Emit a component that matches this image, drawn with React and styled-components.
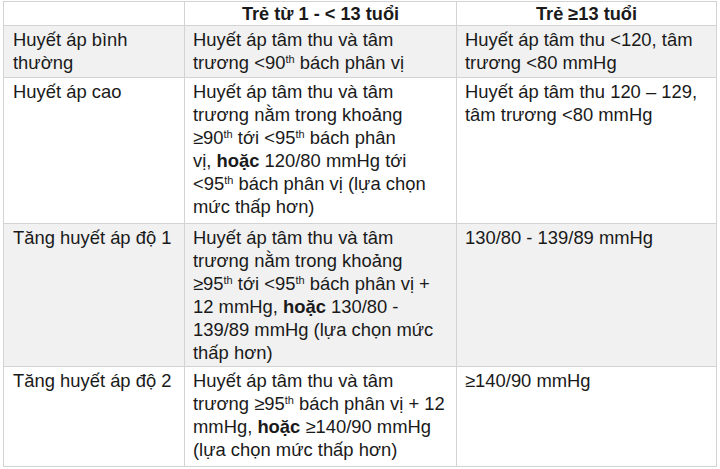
import React from "react";
import styled, { createGlobalStyle } from "styled-components";

const Global = createGlobalStyle`
  html, body { margin: 0; padding: 0; background: #ffffff; }
  body { font-family: "Liberation Sans", Arial, sans-serif; color: #1a1a1a; }
`;

const Page = styled.div`
  padding: 1px 0 0 3px;
`;

const Table = styled.div`
  width: 714px;
  display: flex;
  flex-direction: column;
  border-top: 1px solid #d3d3d3;
  border-left: 1px solid #d3d3d3;
  box-sizing: border-box;
`;

const Row = styled.div`
  display: grid;
  grid-template-columns: 181px 272px 260px;
  height: ${(p) => p.$h}px;
  box-sizing: border-box;
  border-bottom: 1px solid #d3d3d3;
  background: ${(p) => (p.$shade ? "#f1f1f1" : "#ffffff")};
`;

const Cell = styled.div`
  box-sizing: border-box;
  border-right: 1px solid #d3d3d3;
  padding: 2px 6px 0 ${(p) => (p.$first ? 9 : 8)}px;
  font-size: 18.4px;
  line-height: 23px;
  white-space: nowrap;
  overflow: hidden;
`;

const HeadCell = styled.div`
  box-sizing: border-box;
  border-right: 1px solid #d3d3d3;
  font-size: 18.2px;
  font-weight: 700;
  line-height: 22px;
  padding-top: 1px;
  text-align: center;
  white-space: nowrap;
`;

const Line = styled.div``;

const Sup = styled.sup`
  font-size: 11px;
  line-height: 0;
  vertical-align: 6px;
`;

const B = styled.b`
  font-weight: 700;
`;

const th = <Sup>th</Sup>;

const rows = [
  {
    h: 52,
    shade: true,
    c1: ["Huyết áp bình", "thường"],
    c2: [
      "Huyết áp tâm thu và tâm",
      <>trương &lt;90{th} bách phân vị</>,
    ],
    c3: ["Huyết áp tâm thu <120, tâm", "trương <80 mmHg"],
  },
  {
    h: 146,
    shade: false,
    c1: ["Huyết áp cao"],
    c2: [
      "Huyết áp tâm thu và tâm",
      "trương nằm trong khoảng",
      <>≥90{th} tới &lt;95{th} bách phân</>,
      <>vị, <B>hoặc</B> 120/80 mmHg tới</>,
      <>&lt;95{th} bách phân vị (lựa chọn</>,
      "mức thấp hơn)",
    ],
    c3: ["Huyết áp tâm thu 120 – 129,", "tâm trương <80 mmHg"],
  },
  {
    h: 143,
    shade: true,
    c1: ["Tăng huyết áp độ 1"],
    c2: [
      "Huyết áp tâm thu và tâm",
      "trương nằm trong khoảng",
      <>≥95{th} tới &lt;95{th} bách phân vị +</>,
      <>12 mmHg, <B>hoặc</B> 130/80 -</>,
      "139/89 mmHg (lựa chọn mức",
      "thấp hơn)",
    ],
    c3: ["130/80 - 139/89 mmHg"],
  },
  {
    h: 100,
    shade: false,
    c1: ["Tăng huyết áp độ 2"],
    c2: [
      "Huyết áp tâm thu và tâm",
      <>trương ≥95{th} bách phân vị + 12</>,
      <>mmHg, <B>hoặc</B> ≥140/90 mmHg</>,
      "(lựa chọn mức thấp hơn)",
    ],
    c3: ["≥140/90 mmHg"],
  },
];

const Lines = ({ items }) =>
  items.map((t, i) => <Line key={i}>{t}</Line>);

export default function App() {
  return (
    <>
      <Global />
      <Page>
        <Table>
          <Row $h={24}>
            <HeadCell />
            <HeadCell>Trẻ từ 1 - &lt; 13 tuổi</HeadCell>
            <HeadCell>Trẻ ≥13 tuổi</HeadCell>
          </Row>
          {rows.map((r, i) => (
            <Row key={i} $h={r.h} $shade={r.shade}>
              <Cell $first>
                <Lines items={r.c1} />
              </Cell>
              <Cell>
                <Lines items={r.c2} />
              </Cell>
              <Cell>
                <Lines items={r.c3} />
              </Cell>
            </Row>
          ))}
        </Table>
      </Page>
    </>
  );
}
